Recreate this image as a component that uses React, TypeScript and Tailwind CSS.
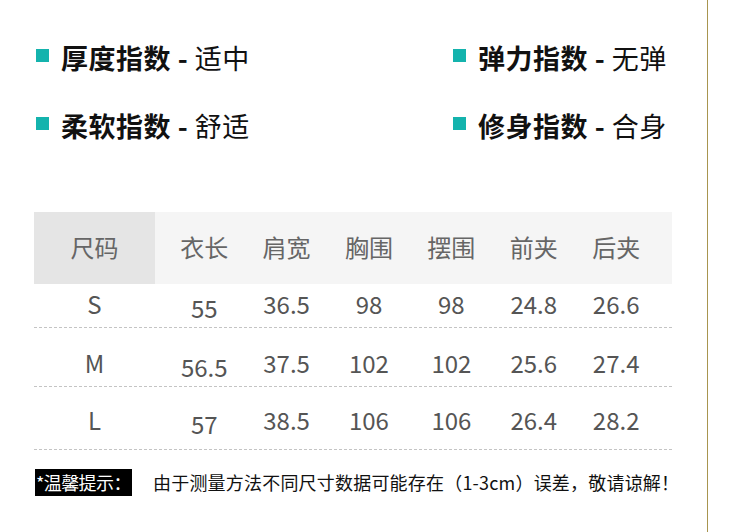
const features = [
  { label: "厚度指数", value: "适中" },
  { label: "弹力指数", value: "无弹" },
  { label: "柔软指数", value: "舒适" },
  { label: "修身指数", value: "合身" },
];

const columns = ["衣长", "肩宽", "胸围", "摆围", "前夹", "后夹"];

const rows = [
  { size: "S", values: ["55", "36.5", "98", "98", "24.8", "26.6"], height: "h-[44px]", pad: "pt-[8px]" },
  { size: "M", values: ["56.5", "37.5", "102", "102", "25.6", "27.4"], height: "h-[59px]", pad: "pt-[23px]" },
  { size: "L", values: ["57", "38.5", "106", "106", "26.4", "28.2"], height: "h-[63px]", pad: "pt-[21px]" },
];

function Feature({ label, value }: { label: string; value: string }) {
  return (
    <div className="flex items-center gap-3 h-8">
      <span className="w-[13px] h-[13px] bg-[#14b3ad] mb-1.5 shrink-0" />
      <span className="text-[27px] leading-8 tracking-[0.5px] text-[#111] whitespace-nowrap">
        <span className="font-bold">{label}</span>
        <span className="font-bold"> - </span>
        {value}
      </span>
    </div>
  );
}

export default function App() {
  return (
    <div className="w-[750px] h-[532px] bg-white flex font-['Noto_Sans_CJK_SC',sans-serif]">
      <div className="w-[707px] shrink-0">
        {/* Feature indices */}
        <div className="grid grid-cols-[417px_1fr] gap-y-9 pl-[36px] pt-[42px]">
          {features.map((f) => (
            <Feature key={f.label} label={f.label} value={f.value} />
          ))}
        </div>

        {/* Size table */}
        <div className="ml-[34px] w-[638px] mt-[70px]">
          <div className="flex h-[72px] bg-[#f5f5f5] text-[24px] text-[#666]">
            <div className="w-[121px] bg-[#e5e5e5] flex items-center justify-center pb-[3px]">尺码</div>
            <div className="flex pl-2">
              {columns.map((c) => (
                <div key={c} className="w-[82.4px] flex items-center justify-center pb-[3px]">
                  {c}
                </div>
              ))}
            </div>
          </div>
          {rows.map((r) => (
            <div
              key={r.size}
              className={`flex ${r.height} border-b border-dashed border-[#c4c4c4] text-[24px] leading-6 text-[#555]`}
            >
              <div className={`w-[121px] text-center ${r.pad}`}>{r.size}</div>
              <div className="flex pl-2">
                {r.values.map((v, i) => (
                  <div key={i} className={`w-[82.4px] text-center ${r.pad}`}>
                    <span className={i === 0 ? "relative top-[4px]" : ""}>{v}</span>
                  </div>
                ))}
              </div>
            </div>
          ))}
        </div>

        {/* Notice */}
        <div className="flex items-center ml-[35px] mt-[19px] gap-[21px]">
          <span className="h-[27px] w-[97px] bg-black text-white text-[18px] leading-[27px] pl-[1px] tracking-[-0.6px] whitespace-nowrap">
            *温馨提示：
          </span>
          <span className="text-[18px] tracking-[0.2px] text-[#111] whitespace-nowrap">
            由于测量方法不同尺寸数据可能存在（1-3cm）误差，敬请谅解！
          </span>
        </div>
      </div>
      <div className="flex-1 border-l border-[#a8954f]" />
    </div>
  );
}
